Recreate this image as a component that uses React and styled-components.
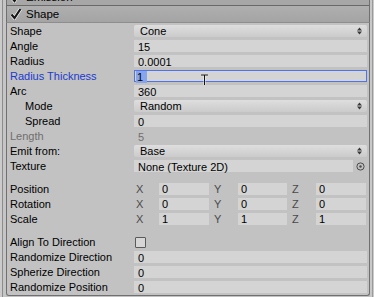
import React from 'react';
import styled, { createGlobalStyle } from 'styled-components';

const GlobalStyle = createGlobalStyle`
  html, body {
    margin: 0;
    padding: 0;
    background: #c2c2c2;
  }
  body {
    font-family: "Liberation Sans", Arial, sans-serif;
    font-size: 11px;
    color: #000;
  }
`;

const Window = styled.div`
  width: 374px;
  height: 297px;
  display: flex;
  overflow: hidden;
  background: #c2c2c2;
`;

const LeftEdge = styled.div`
  width: 6px;
  flex: none;
  background: linear-gradient(to right, #cbcbcb 0 2px, #8c8c8c 2px 3px, #c5c5c5 3px);
`;

const RightEdge = styled.div`
  flex: 1;
  background: linear-gradient(to right, #c8c8c8 0 2px, #9a9a9a 2px 3px, #cbcbcb 3px);
`;

const Column = styled.div`
  width: 364px;
  flex: none;
  display: flex;
  flex-direction: column;
`;

const PrevClip = styled.div`
  height: 5px;
  overflow: hidden;
  display: flex;
  flex-direction: column;
  justify-content: flex-end;
  border-left: 1px solid #707070;
  border-right: 1px solid #707070;
  border-bottom: 1px solid #6a6a6a;
  background: #a7a7a7;
`;

const Header = styled.div`
  flex: none;
  height: 16px;
  display: flex;
  align-items: center;
  gap: 4px;
  padding-left: 3px;
  background: ${p => (p.$bare ? 'none' : 'linear-gradient(#afafaf, #a4a4a4)')};
  border-left: ${p => (p.$bare ? 'none' : '1px solid #707070')};
  border-right: ${p => (p.$bare ? 'none' : '1px solid #707070')};
  border-bottom: ${p => (p.$bare ? 'none' : '1px solid #8e8e8e')};
  font-size: 11.5px;
`;

const Box = styled.div`
  flex: 1;
  display: flex;
  flex-direction: column;
  padding: 1px 2px 0 3px;
  border-left: 1px solid #707070;
  border-right: 1px solid #707070;
  border-bottom: 1px solid #707070;
  border-radius: 0 0 3px 3px;
  margin-bottom: 1px;
`;

const Row = styled.div`
  height: 15px;
  display: flex;
  align-items: flex-start;
  flex: none;
`;

const Label = styled.div`
  width: ${p => 124 - (p.$indent || 0)}px;
  padding-left: ${p => p.$indent || 0}px;
  flex: none;
  line-height: 15px;
  white-space: nowrap;
  color: ${p => (p.$tone === 'blue' ? '#1a3ad0' : p.$tone === 'dim' ? '#6f6f6f' : '#000')};
`;

const Field = styled.div`
  position: relative;
  flex: 1;
  height: 12px;
  margin-top: 1px;
  line-height: 12px;
  padding-left: 3px;
  box-sizing: border-box;
  background: ${p => (p.$flat ? 'transparent' : '#d4d4d4')};
  color: ${p => (p.$flat ? '#6f6f6f' : '#000')};
  border: 1px solid ${p => (p.$focus ? '#4f72ee' : 'transparent')};
  white-space: nowrap;
`;

const Dropdown = styled.div`
  flex: 1;
  height: 12px;
  margin-top: 1px;
  display: flex;
  align-items: center;
  justify-content: space-between;
  padding: 0 5px 0 6px;
  background: linear-gradient(#dedede, #cbcbcb);
  border-radius: 2px;
`;

const PickerRow = styled.div`
  flex: 1;
  display: flex;
  align-items: flex-start;
`;

const PickerButton = styled.div`
  width: 14px;
  height: 14px;
  display: flex;
  align-items: center;
  justify-content: center;
`;

const Selected = styled.span`
  background: #87a5ea;
  padding: 0 4px 0 1px;
  margin-left: -2px;
`;

const Caret = styled.svg`
  position: absolute;
  left: 65px;
  top: 3px;
`;

const Gap = styled.div`
  height: 8px;
  flex: none;
`;

const Vector = styled.div`
  flex: 1;
  display: grid;
  grid-template-columns: 25px 50px 29px 49px 29px 50px;
  align-items: start;
`;

const Axis = styled.div`
  line-height: 15px;
  padding-left: ${p => p.$pad}px;
  color: #4a4a4a;
`;

const AxisField = styled.div`
  height: 12px;
  margin-top: 1px;
  line-height: 12px;
  padding-left: 3px;
  background: #d4d4d4;
`;

const Toggle = styled.div`
  width: 9px;
  height: 9px;
  margin: 2px 0 0 1px;
  border: 1px solid #5a5a5a;
  background: #d6d6d6;
  border-radius: 1px;
`;

const Check = () => (
  <svg width="12" height="12" viewBox="0 0 12 12">
    <path d="M1.5 6.5 L4.5 10 L10.5 1" fill="none" stroke="#f0f0f0" strokeWidth="3.6" />
    <path d="M1.5 6.5 L4.5 10 L10.5 1" fill="none" stroke="#161616" strokeWidth="2.2" />
  </svg>
);

const Arrows = () => (
  <svg width="5" height="8" viewBox="0 0 5 8">
    <path d="M0 3.5 L2.5 0.5 L5 3.5 Z M0 4.5 L2.5 7.5 L5 4.5 Z" fill="#3a3a3a" />
  </svg>
);

const Picker = () => (
  <svg width="9" height="9" viewBox="0 0 9 9">
    <circle cx="4.5" cy="4.5" r="3.6" fill="none" stroke="#4a4a4a" strokeWidth="1" />
    <circle cx="4.5" cy="4.5" r="1.2" fill="#4a4a4a" />
  </svg>
);

const IBeam = () => (
  <Caret width="9" height="17" viewBox="0 0 9 17">
    <path d="M1 1 H8 M1 16 H8 M4.5 1 V16" stroke="#fff" strokeWidth="2.5" opacity="0.5" />
    <path d="M1 1 H8 M1 16 H8 M4.5 1 V16" stroke="#111" strokeWidth="1" />
  </Caret>
);

function ValueRow({ label, value, indent, tone }) {
  return (
    <Row>
      <Label $indent={indent} $tone={tone}>{label}</Label>
      <Field $flat={tone === 'dim'}>{value}</Field>
    </Row>
  );
}

function SelectRow({ label, value, indent }) {
  return (
    <Row>
      <Label $indent={indent}>{label}</Label>
      <Dropdown>
        <span>{value}</span>
        <Arrows />
      </Dropdown>
    </Row>
  );
}

function VectorRow({ label, v }) {
  return (
    <Row>
      <Label>{label}</Label>
      <Vector>
        <Axis $pad={2}>X</Axis>
        <AxisField>{v[0]}</AxisField>
        <Axis $pad={5}>Y</Axis>
        <AxisField>{v[1]}</AxisField>
        <Axis $pad={5}>Z</Axis>
        <AxisField>{v[2]}</AxisField>
      </Vector>
    </Row>
  );
}

export default function App() {
  return (
    <Window>
      <GlobalStyle />
      <LeftEdge />
      <Column>
        <PrevClip>
          <Header $bare>
            <Check />
            <span>Emission</span>
          </Header>
        </PrevClip>
        <Header>
          <Check />
          <span>Shape</span>
        </Header>
        <Box>
          <SelectRow label="Shape" value="Cone" />
          <ValueRow label="Angle" value="15" />
          <ValueRow label="Radius" value="0.0001" />
          <Row>
            <Label $tone="blue">Radius Thickness</Label>
            <Field $focus>
              <Selected>1</Selected>
              <IBeam />
            </Field>
          </Row>
          <ValueRow label="Arc" value="360" />
          <SelectRow label="Mode" value="Random" indent={15} />
          <ValueRow label="Spread" value="0" indent={15} />
          <ValueRow label="Length" value="5" tone="dim" />
          <SelectRow label="Emit from:" value="Base" />
          <Row>
            <Label>Texture</Label>
            <PickerRow>
              <Field>None (Texture 2D)</Field>
              <PickerButton>
                <Picker />
              </PickerButton>
            </PickerRow>
          </Row>
          <Gap />
          <VectorRow label="Position" v={['0', '0', '0']} />
          <VectorRow label="Rotation" v={['0', '0', '0']} />
          <VectorRow label="Scale" v={['1', '1', '1']} />
          <Gap />
          <Row>
            <Label>Align To Direction</Label>
            <Toggle />
          </Row>
          <ValueRow label="Randomize Direction" value="0" />
          <ValueRow label="Spherize Direction" value="0" />
          <ValueRow label="Randomize Position" value="0" />
        </Box>
      </Column>
      <RightEdge />
    </Window>
  );
}
